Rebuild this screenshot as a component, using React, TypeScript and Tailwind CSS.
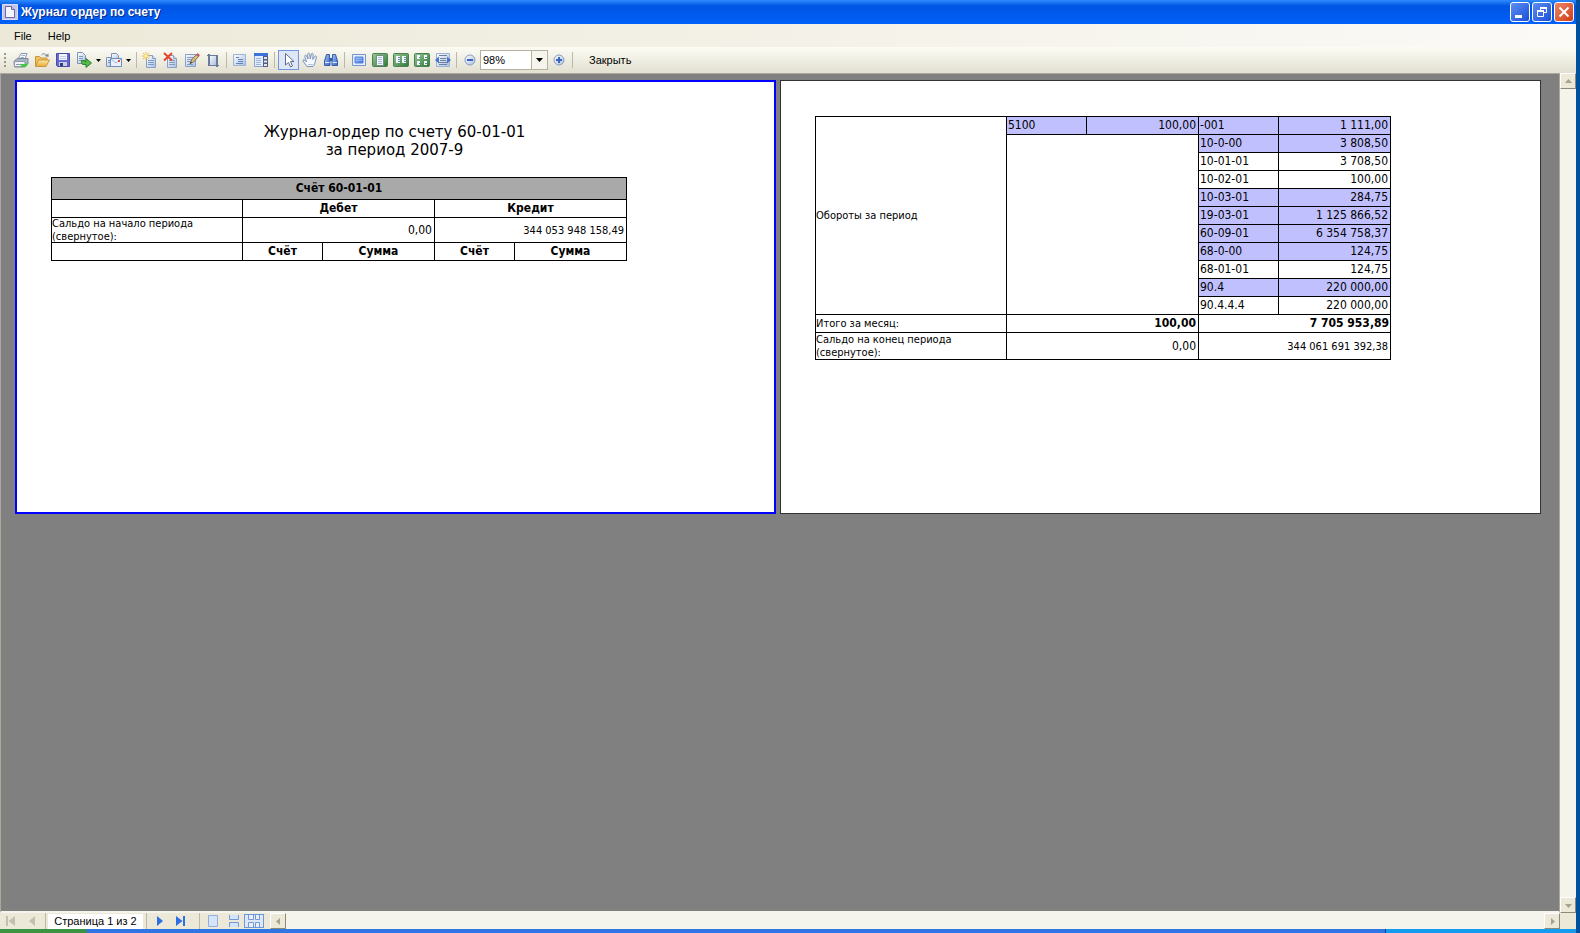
import { ReactNode } from "react";

type Turnover = { account: string; sum: string; group: boolean };

const credits: Turnover[] = [
    { account: "-001", sum: "1 111,00", group: true },
    { account: "10-0-00", sum: "3 808,50", group: true },
    { account: "10-01-01", sum: "3 708,50", group: false },
    { account: "10-02-01", sum: "100,00", group: false },
    { account: "10-03-01", sum: "284,75", group: true },
    { account: "19-03-01", sum: "1 125 866,52", group: true },
    { account: "60-09-01", sum: "6 354 758,37", group: true },
    { account: "68-0-00", sum: "124,75", group: true },
    { account: "68-01-01", sum: "124,75", group: false },
    { account: "90.4", sum: "220 000,00", group: true },
    { account: "90.4.4.4", sum: "220 000,00", group: false }
];

const Svg = ({ children }: { children: ReactNode }) => (
    <svg width="16" height="16" viewBox="0 0 16 16" className="shrink-0">
        {children}
    </svg>
);

// gradients shared by all the toolbar icons
const Gradients = () => (
    <svg width="0" height="0" className="absolute">
        <defs>
            <linearGradient id="paper" x1="0" y1="0" x2="1" y2="1">
                <stop offset="0" stopColor="#ffffff" />
                <stop offset="1" stopColor="#a9bfe0" />
            </linearGradient>
            <linearGradient id="blue" x1="0" y1="0" x2="1" y2="1">
                <stop offset="0" stopColor="#a9c8fb" />
                <stop offset="1" stopColor="#2f62d0" />
            </linearGradient>
            <linearGradient id="green" x1="0" y1="0" x2="1" y2="1">
                <stop offset="0" stopColor="#9cc795" />
                <stop offset="1" stopColor="#2c7a33" />
            </linearGradient>
            <linearGradient id="folder" x1="0" y1="0" x2="0" y2="1">
                <stop offset="0" stopColor="#ffe9a3" />
                <stop offset="1" stopColor="#e9a83a" />
            </linearGradient>
        </defs>
    </svg>
);

const Sheet = () => (
    <>
        <path d="M4.5 3.5h6l3 3v9h-9z" fill="url(#paper)" stroke="#8a9fc4" />
        <path d="M10.5 3.5v3h3" fill="#dbe6f8" stroke="#8a9fc4" />
        <path d="M6 8.5h6M6 10.5h6M6 12.5h6" stroke="#7f9cc9" />
    </>
);

const PrintIcon = () => (
    <Svg>
        <path d="M5 7 8 1.5h6L12 7z" fill="#f4f8ff" stroke="#8a96a8" />
        <path d="M8.5 3.5H12M7.5 5.5H11" stroke="#9db1cc" />
        <path d="M1 9.5 4 6.5h11v5l-3 3.5H1.5z" fill="#a9b4c2" stroke="#7c899b" />
        <path d="M1.5 9.5H12v5H1.5z" fill="#eef1f5" stroke="#8f9bad" />
        <path d="M3 12.5h5" stroke="#8f9bad" />
        <path d="M8 12h5l1.5-2v3l-2 2H8z" fill="#3fc944" />
    </Svg>
);

const OpenIcon = () => (
    <Svg>
        <path d="M1.5 14V4.5h4L7 6h6v3" fill="#f0c15c" stroke="#c9973a" />
        <path d="M1.5 14.5 4.5 8h11L12 14.5z" fill="url(#folder)" stroke="#c9973a" />
        <path d="M7.5 3c2-2 4-1.5 5 .8" fill="none" stroke="#7b8796" />
        <path d="m10.5 4 4 1V1.5z" fill="#7b8796" />
    </Svg>
);

const SaveIcon = () => (
    <Svg>
        <path d="M1.5 1.5h13v13h-12l-1-1z" fill="#6269d3" stroke="#474ca8" />
        <path d="M4 2h8v6H4z" fill="#f2f5ff" />
        <path d="M5 4.5h6M5 6.5h6" stroke="#c5cdea" />
        <path d="M4 10h8v4H4z" fill="#c9cfe2" />
        <path d="M5 11h3v3H5z" fill="#373d7c" />
    </Svg>
);

const ExportIcon = () => (
    <Svg>
        <path d="M1.5.5h5l3 3v8h-8z" fill="url(#paper)" stroke="#8294b3" />
        <path d="M3 4.5h4M3 6.5h4M3 8.5h4" stroke="#7f9cc9" />
        <path d="M5.5 8.5v2c0 1.5 1 2 2.5 2h2v3l5.5-4.5L10 6.5v3H8.5v-1z" fill="#55bb49" stroke="#2d8132" />
    </Svg>
);

const MailIcon = () => (
    <Svg>
        <path d="M5.5 1.5h5l2 2v5h-7z" fill="url(#paper)" stroke="#8294b3" />
        <path d="M.5 5.5h5v9h-5z" fill="url(#paper)" stroke="#8294b3" />
        <path d="M2 8.5h2M2 10.5h2" stroke="#6f8fc4" />
        <path d="M4.5 6.5h11v8h-11z" fill="#eaf1fd" stroke="#6d8abd" />
        <path d="m5 7 5 4 5-4" fill="none" stroke="#9fb5da" />
        <path d="M12 8h2v2h-2z" fill="#e2502f" />
    </Svg>
);

const NewPageIcon = () => (
    <Svg>
        <Sheet />
        <path d="M4 0v8M0 4h8M1 1l6 6M7 1 1 7" stroke="#eebb38" />
        <path d="M2.5 2.5h3v3h-3z" fill="#fff3a8" />
    </Svg>
);

const DeletePageIcon = () => (
    <Svg>
        <Sheet />
        <path d="m1 1 8 7.5M9 1 1 8.5" stroke="#e2462b" strokeWidth="2" />
    </Svg>
);

const EditPageIcon = () => (
    <Svg>
        <path d="M1.5 2.5h10v12h-10z" fill="url(#paper)" stroke="#8a9fc4" />
        <path d="M3 5.5h6M3 7.5h5M3 9.5h3M3 12.5h6" stroke="#7f9cc9" />
        <path d="m6.5 11 1-3L13 2l2 2-5.5 6z" fill="#dfc27c" stroke="#7d6c4c" />
        <path d="m12 3 1.5-2L16 3l-1.5 2z" fill="#c65a63" />
        <path d="m5.5 12 1-2.5L8 11z" fill="#333" />
    </Svg>
);

const PageSetupIcon = () => (
    <Svg>
        <path d="M3.5 3.5h8v10h-8z" fill="url(#paper)" stroke="#6d7c95" />
        <path d="M4 2v12M12 3v12" stroke="#6d7c95" strokeWidth="2" />
        <path d="M2 3.5h11M3 13.5h11" stroke="#6d7c95" />
    </Svg>
);

const OutlineIcon = () => (
    <Svg>
        <path d="M1.5 2.5h12v11h-12z" fill="url(#paper)" stroke="#9db2d6" />
        <path d="M4 5.5h3M6 7.5h5M6 9.5h5M4 11.5h7" stroke="#6285c2" />
    </Svg>
);

const ThumbsIcon = () => (
    <Svg>
        <path d="M1.5 1.5h13v13h-13z" fill="#e3ecfb" stroke="#8aa2cc" />
        <path d="M1 1h14v3H1z" fill="#3d72dc" />
        <path d="M3 6.5h5M3 8.5h5M3 10.5h5M3 12.5h5" stroke="#9db4da" />
        <path d="M10 4h5v11h-5z" fill="#53617c" />
        <path d="M11 5h3v2h-3zM11 8.5h3v2h-3zM11 12h3v2h-3z" fill="#dce6f7" />
    </Svg>
);

const PointerIcon = () => (
    <Svg>
        <path d="M4.5 1.5V13l3-2.5 2 4.5 2-1-2-4.5H13z" fill="#fff" stroke="#5b6c8e" />
    </Svg>
);

const HandIcon = () => (
    <Svg>
        <path
            d="M5 14.5 1 9c-.5-1.5 1-1.8 1.8-.8L4.5 10 2.8 4.5c-.2-1.5 1.4-1.7 1.9-.4L6 7 5.7 2.3c0-1.5 1.8-1.5 2 0L8.300 7l1-4.800c.3-1.300 1.900-1 1.800.3L10.800 7.500l1.900-3c.8-1.200 2.200-.3 1.700.9L13 10.500c-.5 2-1 3-2 4z"
            fill="#f6f9ff"
            stroke="#7b8eb3"
        />
        <path d="M6 12.5h5" stroke="#b3c2df" />
    </Svg>
);

const SearchIcon = () => (
    <Svg>
        <path d="M3.5 2.5h3V5l.5 2v6.5H1.5V9z" fill="url(#blue)" stroke="#3a5c9e" />
        <path d="M9.5 2.5h3l2 6.5v4.5H9V7l.5-2z" fill="url(#blue)" stroke="#3a5c9e" />
        <path d="M6.5 6h3v3h-3z" fill="#355ca8" />
        <path d="M2 10.5h4.5M9.5 10.5H14" stroke="#dbe8ff" />
    </Svg>
);

const ActualSizeIcon = () => (
    <Svg>
        <path d="M1.5 2.5h13v11h-13z" fill="#e4eefe" stroke="#7795cc" />
        <path d="M4 5h8v6H4z" fill="url(#blue)" stroke="#5c86dc" />
        <path d="M5 6.5h6M5 8.5h6" stroke="#8ab2f7" />
    </Svg>
);

const GreenBox = ({ children }: { children: ReactNode }) => (
    <Svg>
        <rect x=".5" y="1.5" width="15" height="13" rx="1" fill="url(#green)" stroke="#4b8150" />
        {children}
    </Svg>
);

const FitPageIcon = () => (
    <GreenBox>
        <path d="M4.5 3.5h7v10h-7z" fill="#f3f7ff" stroke="#6f8f80" />
        <path d="M6 5.5h4M6 7.5h4M6 9.5h4M6 11.5h4" stroke="#a5b8d8" />
    </GreenBox>
);

const TwoPagesIcon = () => (
    <GreenBox>
        <path d="M3 4h4v7H3zM9 4h4v7H9z" fill="#f3f7ff" />
        <path d="M5 5.5h2M5 7.5h2M5 9.5h2M11 5.5h2M11 7.5h2M11 9.5h2" stroke="#5f83a8" />
    </GreenBox>
);

const FourPagesIcon = () => (
    <GreenBox>
        <path d="M3 3h3v4H3zM10 3h3v4h-3zM3 9h3v4H3zM10 9h3v4h-3z" fill="#f3f7ff" />
        <path d="M5 5.5h2M11 5.5h2M5 11.5h2M11 11.5h2" stroke="#5f83a8" />
    </GreenBox>
);

const FitWidthIcon = () => (
    <Svg>
        <path d="M1.5 1.5h13v13h-13z" fill="url(#paper)" stroke="#9db2d6" />
        <path d="M4 3.5h8M5 6.5h6M5 8.5h6M4 12.5h8" stroke="#6e7f9c" />
        <path d="M4 10.5h8" stroke="#6e7f9c" />
        <path d="m0 8 4-3.5v7zM16 8l-4-3.5v7z" fill="#4a74c6" />
    </Svg>
);

const ZoomIcon = ({ plus }: { plus?: boolean }) => (
    <Svg>
        <circle cx="8" cy="8" r="5" fill="url(#paper)" stroke="#8a9dc2" />
        <path d="M5 8h6" stroke="#3a65bd" strokeWidth="2" />
        {plus && <path d="M8 5v6" stroke="#3a65bd" strokeWidth="2" />}
    </Svg>
);

const Tool = ({ label, active, children }: { label: string; active?: boolean; children: ReactNode }) => (
    <button
        aria-label={label}
        className={
            active
                ? "flex h-5 w-[21px] items-center justify-center border border-[#6f97dc] bg-[#dfe7f6]"
                : "flex h-5 w-[21px] items-center justify-center"
        }
    >
        {children}
    </button>
);

const DropArrow = ({ label }: { label: string }) => (
    <button aria-label={label} className="flex h-5 w-[9px] items-center justify-center">
        <svg width="5" height="3" viewBox="0 0 5 3">
            <path d="M0 0h5L2.5 3z" />
        </svg>
    </button>
);

const Separator = () => (
    <div className="flex w-[6px] justify-center">
        <div className="h-4 w-px bg-[#bdb9a6]" />
    </div>
);

const ScrollButton = ({ label, d }: { label: string; d: string }) => (
    <button
        aria-label={label}
        className="flex size-4 shrink-0 items-center justify-center border border-t-white border-r-[#8d8a78] border-b-[#8d8a78] border-l-white bg-[#ece9d8]"
    >
        <svg width="7" height="7" viewBox="0 0 7 7">
            <path d={d} fill="#a5a290" />
        </svg>
    </button>
);

const TitleBar = () => (
    <header className="flex h-6 shrink-0 items-center bg-linear-to-b from-[#2f8bff] via-[#0054e3] via-25% to-[#0061fa] pr-[2px] pl-0.5">
        <svg width="16" height="16" viewBox="0 0 16 16">
            <path d="M.5.5h15v15H.5z" fill="#c4c4e8" stroke="#dcdcf2" />
            <path d="M3.5 2.5h6l3 3v8h-9z" fill="#f4f4fd" stroke="#6a68a8" />
            <path d="M9.5 2.5v3h3" fill="#c9c8ea" stroke="#6a68a8" />
        </svg>
        <h1 className="ml-[3px] flex-1 text-[12px] leading-4 font-bold text-white [text-shadow:1px_1px_#0a2a86]">
            Журнал ордер по счету
        </h1>
        <div className="flex gap-[2px]">
            <button aria-label="Свернуть" className="size-5 rounded-[3px] border border-white bg-linear-to-br from-[#5d8cf2] to-[#1a4fd6]">
                <svg width="18" height="18" viewBox="0 0 18 18">
                    <path d="M4 12h7v3H4z" fill="#fff" />
                </svg>
            </button>
            <button aria-label="Восстановить" className="size-5 rounded-[3px] border border-white bg-linear-to-br from-[#5d8cf2] to-[#1a4fd6]">
                <svg width="18" height="18" viewBox="0 0 18 18" fill="none" stroke="#fff">
                    <path d="M4.5 8.5h6v5h-6zM7.5 7V4.5h6v5H11" />
                    <path d="M4 8h7M7 5h7" strokeWidth="2" />
                </svg>
            </button>
            <button aria-label="Закрыть окно" className="size-5 rounded-[3px] border border-white bg-linear-to-br from-[#ee8563] to-[#cf3a10]">
                <svg width="18" height="18" viewBox="0 0 18 18">
                    <path d="m4.5 4.5 9 9M13.5 4.5l-9 9" stroke="#fff" strokeWidth="2" />
                </svg>
            </button>
        </div>
    </header>
);

const Toolbar = () => (
    <div className="flex h-[26px] shrink-0 items-center bg-linear-to-b from-[#fcfcf5] to-[#e2e0d0] pl-1">
        <svg width="6" height="14" viewBox="0 0 6 14" className="shrink-0">
            <path d="M0 0h2v2H0zM0 4h2v2H0zM0 8h2v2H0zM0 12h2v2H0z" fill="#9c9986" />
        </svg>
        <Tool label="Печать"><PrintIcon /></Tool>
        <Tool label="Открыть"><OpenIcon /></Tool>
        <Tool label="Сохранить"><SaveIcon /></Tool>
        <Tool label="Экспорт"><ExportIcon /></Tool>
        <DropArrow label="Форматы экспорта" />
        <Tool label="Отправить"><MailIcon /></Tool>
        <DropArrow label="Форматы отправки" />
        <Separator />
        <Tool label="Новая страница"><NewPageIcon /></Tool>
        <Tool label="Удалить страницу"><DeletePageIcon /></Tool>
        <Tool label="Правка страницы"><EditPageIcon /></Tool>
        <Tool label="Параметры страницы"><PageSetupIcon /></Tool>
        <Separator />
        <Tool label="Закладки"><OutlineIcon /></Tool>
        <Tool label="Миниатюры"><ThumbsIcon /></Tool>
        <Separator />
        <div className="pl-px">
            <Tool label="Выбор" active><PointerIcon /></Tool>
        </div>
        <Tool label="Рука"><HandIcon /></Tool>
        <Tool label="Найти"><SearchIcon /></Tool>
        <Separator />
        <div className="flex pl-px">
            <Tool label="Реальный размер"><ActualSizeIcon /></Tool>
            <Tool label="Страница целиком"><FitPageIcon /></Tool>
            <Tool label="Две страницы"><TwoPagesIcon /></Tool>
            <Tool label="Несколько страниц"><FourPagesIcon /></Tool>
            <Tool label="По ширине"><FitWidthIcon /></Tool>
        </div>
        <Separator />
        <Tool label="Уменьшить"><ZoomIcon /></Tool>
        <div className="relative">
            <select
                aria-label="Масштаб"
                className="block h-5 w-[68px] appearance-none border border-[#b5b2a0] bg-white pl-[2px] text-[11px]"
            >
                <option>98%</option>
            </select>
            <div className="pointer-events-none absolute inset-y-0 right-0 flex w-[17px] items-center justify-center border border-[#b5b2a0] bg-[#f6f5ec]">
                <svg width="7" height="4" viewBox="0 0 7 4">
                    <path d="M0 0h7L3.5 4z" />
                </svg>
            </div>
        </div>
        <Tool label="Увеличить"><ZoomIcon plus /></Tool>
        <Separator />
        <button className="ml-[14px] text-[11px] leading-4">Закрыть</button>
    </div>
);

const Columns = () => (
    <colgroup>
        <col />
        <col className="w-[80px]" />
        <col className="w-[112px]" />
        <col className="w-[80px]" />
        <col className="w-[112px]" />
    </colgroup>
);

const FirstPage = () => (
    <section className="h-[434px] w-[761px] shrink-0 border-2 border-[#0000ff] bg-white px-[34px] pt-[41px]">
        <h2 className="mr-[2px] text-center font-['DejaVu_Sans',sans-serif] text-[15px] leading-[18px]">
            Журнал-ордер по счету 60-01-01
            <br />
            за период 2007-9
        </h2>
        <table className="mt-[18px] w-[576px] table-fixed border-collapse font-['DejaVu_Sans_Condensed',sans-serif] text-[12px] leading-[13px] [&_td]:border [&_td]:border-black [&_td]:p-0 [&_th]:border [&_th]:border-black [&_th]:p-0">
            <Columns />
            <tbody>
                <tr className="h-[22px] bg-[#a9a9a9]">
                    <th colSpan={5}>Счёт 60-01-01</th>
                </tr>
                <tr className="h-[18px]">
                    <td></td>
                    <th colSpan={2}>Дебет</th>
                    <th colSpan={2}>Кредит</th>
                </tr>
                <tr className="h-[25px]">
                    <td>
                        <div className="flex h-6 items-center">
                            <p className="text-[11px] leading-[13px]">
                                Сальдо на начало периода
                                <br />
                                (свернутое):
                            </p>
                        </div>
                    </td>
                    <td colSpan={2} className="text-right">
                        <span className="mr-[2px]">0,00</span>
                    </td>
                    <td colSpan={2} className="text-right">
                        <span className="mr-[2px] text-[11px]">344 053 948 158,49</span>
                    </td>
                </tr>
                <tr className="h-[18px]">
                    <td></td>
                    <th>Счёт</th>
                    <th>Сумма</th>
                    <th>Счёт</th>
                    <th>Сумма</th>
                </tr>
            </tbody>
        </table>
    </section>
);

const SecondPage = () => (
    <section className="h-[434px] w-[761px] shrink-0 border border-[#333] bg-white px-[34px] pt-[35px]">
        <table className="w-[576px] table-fixed border-collapse font-['DejaVu_Sans_Condensed',sans-serif] text-[12px] leading-[13px] [&_td]:border [&_td]:border-black [&_td]:p-0">
            <Columns />
            <tbody>
                {credits.map((row, i) => (
                    <tr key={row.account} className="h-[18px]">
                        {i === 0 && (
                            <>
                                <td rowSpan={credits.length} className="text-[11px]">
                                    Обороты за период
                                </td>
                                <td className="bg-[#c0c0ff]">
                                    <span className="ml-px">5100</span>
                                </td>
                                <td className="bg-[#c0c0ff] text-right">
                                    <span className="mr-[2px]">100,00</span>
                                </td>
                            </>
                        )}
                        {i === 1 && <td colSpan={2} rowSpan={credits.length - 1}></td>}
                        <td className={row.group ? "bg-[#c0c0ff]" : ""}>
                            <span className="ml-px">{row.account}</span>
                        </td>
                        <td className={row.group ? "bg-[#c0c0ff] text-right" : "text-right"}>
                            <span className="mr-[2px]">{row.sum}</span>
                        </td>
                    </tr>
                ))}
                <tr className="h-[18px]">
                    <td className="text-[11px]">Итого за месяц:</td>
                    <td colSpan={2} className="text-right font-bold">
                        <span className="mr-[2px]">100,00</span>
                    </td>
                    <td colSpan={2} className="text-right font-bold">
                        <span className="mr-px">7 705 953,89</span>
                    </td>
                </tr>
                <tr className="h-[27px]">
                    <td className="text-[11px]">
                        Сальдо на конец периода
                        <br />
                        (свернутое):
                    </td>
                    <td colSpan={2} className="text-right">
                        <span className="mr-[2px]">0,00</span>
                    </td>
                    <td colSpan={2} className="text-right">
                        <span className="mr-[2px] text-[11px]">344 061 691 392,38</span>
                    </td>
                </tr>
            </tbody>
        </table>
    </section>
);

const NavButton = ({ label, children }: { label: string; children: ReactNode }) => (
    <button aria-label={label} className="flex h-[15px] w-[21px] items-center justify-center">
        {children}
    </button>
);

const StatusBar = () => (
    <footer className="flex h-4 shrink-0 items-center bg-[#ece9d8]">
        <NavButton label="Первая страница">
            <svg width="9" height="10" viewBox="0 0 9 10" fill="#c3c0b0">
                <path d="M0 0h2v10H0zM9 0v10L2.5 5z" />
            </svg>
        </NavButton>
        <NavButton label="Предыдущая страница">
            <svg width="6" height="10" viewBox="0 0 6 10" fill="#c3c0b0">
                <path d="M6 0v10L0 5z" />
            </svg>
        </NavButton>
        <Separator />
        <input
            aria-label="Номер страницы"
            defaultValue="Страница 1 из 2"
            className="h-[15px] w-[95px] bg-white text-center text-[11px] leading-[15px] outline-none"
        />
        <Separator />
        <NavButton label="Следующая страница">
            <svg width="6" height="10" viewBox="0 0 6 10" fill="#2f6fe4">
                <path d="M0 0v10l6-5z" />
            </svg>
        </NavButton>
        <NavButton label="Последняя страница">
            <svg width="9" height="10" viewBox="0 0 9 10" fill="#2f6fe4">
                <path d="M0 0v10l6.500-5zM7 0h2v10H7z" />
            </svg>
        </NavButton>
        <div className="ml-[5px]">
            <Separator />
        </div>
        <NavButton label="Одна страница">
            <svg width="10" height="12" viewBox="0 0 10 12">
                <path d="M.5.5h9v11h-9z" fill="#d6e4fa" stroke="#8fafe3" />
            </svg>
        </NavButton>
        <NavButton label="Непрерывно">
            <svg width="10" height="12" viewBox="0 0 10 12" fill="#d6e4fa" stroke="#7399d8">
                <path d="M.5 0v4.5h9V0M.5 12V7.5h9V12" />
            </svg>
        </NavButton>
        <button
            aria-label="Несколько страниц подряд"
            className="flex h-[14px] w-5 items-center justify-center border border-[#6f97dc] bg-[#dfe7f6]"
        >
            <svg width="14" height="12" viewBox="0 0 14 12" fill="#e9f0fc" stroke="#7399d8">
                <path d="M1.5 0v4.5h5V0M8.5 0v4.5h4V0M1.5 12V7.5h5V12M8.5 12V7.5h4V12" />
            </svg>
        </button>
        <div className="ml-[6px] flex h-4 flex-1 bg-[#f4f3ec]">
            <ScrollButton label="Влево" d="M5 0v7L1 3.5z" />
            <div className="flex-1" />
            <ScrollButton label="Вправо" d="M2 0v7l4-3.5z" />
        </div>
        <div className="w-4" />
    </footer>
);

const App = () => {
    return (
        <div className="h-screen bg-[#00509f] pr-1 font-['Liberation_Sans',Arial,sans-serif] text-black">
            <Gradients />
            <div className="flex h-full flex-col">
                <TitleBar />
                <nav className="flex h-[23px] shrink-0 items-center gap-4 bg-linear-to-r from-[#ece9d8] to-[#fbfaf7] pl-[14px] text-[11px] leading-4">
                    <button>File</button>
                    <button>Help</button>
                </nav>
                <Toolbar />
                <div className="flex min-h-0 flex-1">
                    <main className="flex flex-1 items-start gap-1 overflow-hidden border border-b-2 border-[#aca899] border-b-[#f4f3ec] bg-[#808080] pt-[6px] pl-[14px]">
                        <FirstPage />
                        <SecondPage />
                    </main>
                    <div className="flex w-4 flex-col bg-[#f4f3ec]">
                        <ScrollButton label="Вверх" d="M0 5h7L3.5 1z" />
                        <div className="flex-1" />
                        <ScrollButton label="Вниз" d="M0 2h7L3.5 6z" />
                    </div>
                </div>
                <StatusBar />
                <div className="flex h-1 shrink-0 bg-[#2f76e4]">
                    <div className="w-[87px] rounded-tr-[3px] bg-[#3b9442]" />
                    <div className="flex-1" />
                    <div className="w-[191px] border-l border-[#123f8f] bg-[#139bee]" />
                </div>
            </div>
        </div>
    );
};

export default App;
